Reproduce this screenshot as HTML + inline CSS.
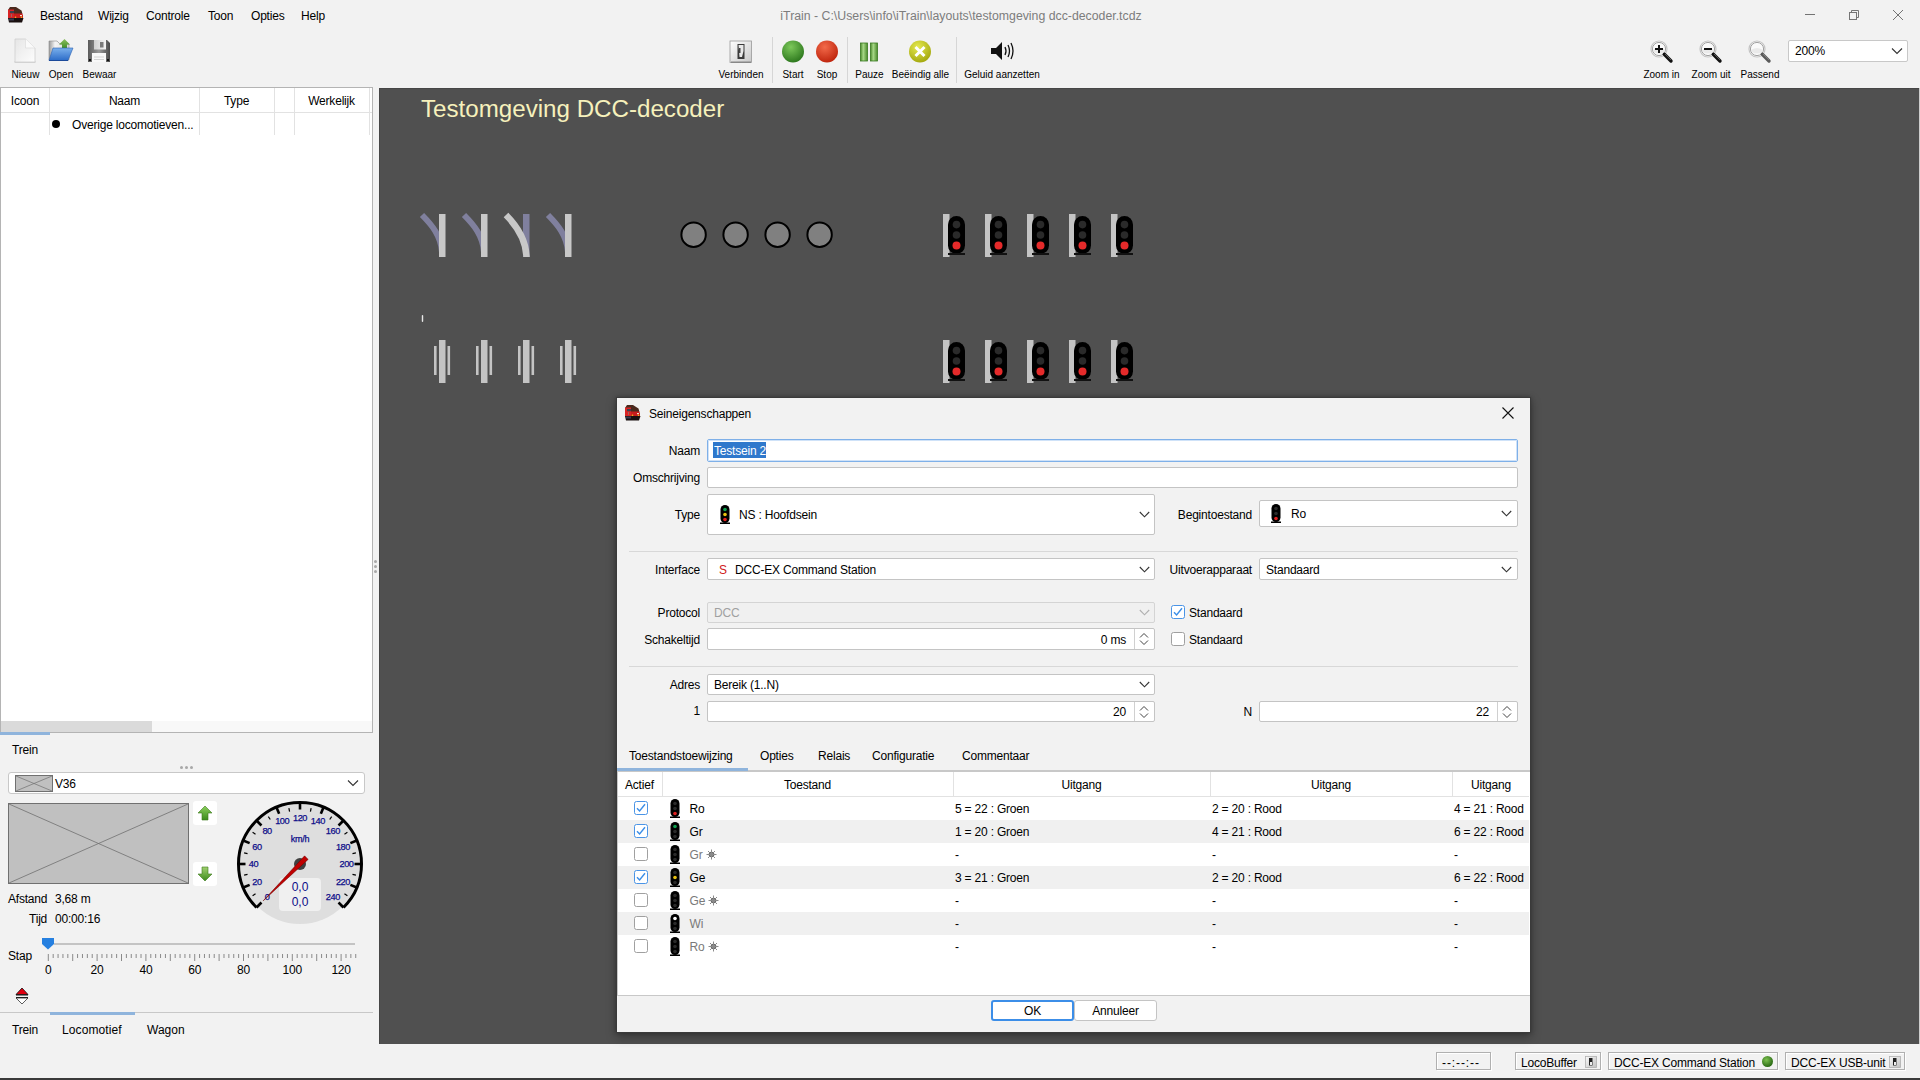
<!DOCTYPE html>
<html><head><meta charset="utf-8"><style>
html,body{margin:0;padding:0;}
body{width:1920px;height:1080px;position:relative;overflow:hidden;background:#f2f2f2;font-family:"Liberation Sans",sans-serif;}
.t{position:absolute;white-space:nowrap;font-family:"Liberation Sans",sans-serif;}
svg{overflow:visible}
</style></head><body>
<svg style="position:absolute;left:0px;top:0px" width="32" height="32" viewBox="0 0 32 32"><path d="M8 10 L10 7 H16 L21.5 10.5 L22.5 14 H8 Z" fill="#4a2a1e"/><rect x="8" y="9.5" width="6" height="9" fill="#d82424"/><rect x="10" y="11" width="4" height="2.2" fill="#3a4050"/><rect x="11" y="14" width="1" height="3" fill="#a06060"/><path d="M14 13.5 H22 L23 15 V18.5 H14 Z" fill="#c81c1c"/><rect x="20" y="15" width="2" height="1.2" fill="#f0e0d0"/><circle cx="15.5" cy="17.2" r="0.8" fill="#f0c020"/><circle cx="21.5" cy="17.2" r="0.8" fill="#f0c020"/><path d="M8 18 H23.5 L22 22.5 H9 Z" fill="#1a1010"/><rect x="9" y="18.5" width="5" height="2" fill="#3a3a50"/></svg>
<div class="t" style="left:40px;top:10.44px;font-size:12px;line-height:12px;color:#000;font-weight:normal;letter-spacing:-0.2px;">Bestand</div>
<div class="t" style="left:98px;top:10.44px;font-size:12px;line-height:12px;color:#000;font-weight:normal;letter-spacing:-0.2px;">Wijzig</div>
<div class="t" style="left:146px;top:10.44px;font-size:12px;line-height:12px;color:#000;font-weight:normal;letter-spacing:-0.2px;">Controle</div>
<div class="t" style="left:208px;top:10.44px;font-size:12px;line-height:12px;color:#000;font-weight:normal;letter-spacing:-0.2px;">Toon</div>
<div class="t" style="left:251px;top:10.44px;font-size:12px;line-height:12px;color:#000;font-weight:normal;letter-spacing:-0.2px;">Opties</div>
<div class="t" style="left:301px;top:10.44px;font-size:12px;line-height:12px;color:#000;font-weight:normal;letter-spacing:-0.2px;">Help</div>
<div class="t" style="left:661.0px;width:600px;text-align:center;top:10.19px;font-size:12.3px;line-height:12.3px;color:#7d7d7d;font-weight:normal;letter-spacing:0px;">iTrain - C:\Users\info\iTrain\layouts\testomgeving dcc-decoder.tcdz</div>
<div style="position:absolute;left:1805px;top:14px;width:10px;height:1px;background:#737373"></div>
<svg style="position:absolute;left:1848px;top:9px" width="12" height="12" viewBox="0 0 12 12"><rect x="1.5" y="3.5" width="7" height="7" fill="none" stroke="#757575" stroke-width="1"/><path d="M3.5 3.5 V1.5 H10.5 V8.5 H8.5" fill="none" stroke="#757575" stroke-width="1"/></svg>
<svg style="position:absolute;left:1892px;top:9px" width="12" height="12" viewBox="0 0 12 12"><path d="M1 1 L11 11 M11 1 L1 11" stroke="#737373" stroke-width="1"/></svg>
<svg style="position:absolute;left:13px;top:38px" width="26" height="27" viewBox="0 0 26 27"><defs><linearGradient id="pg" x1="0" y1="0" x2="1" y2="1"><stop offset="0" stop-color="#e6e6e6"/><stop offset="1" stop-color="#fdfdfd"/></linearGradient></defs><rect x="1.5" y="23" width="21" height="2" fill="#c8c8c8" opacity="0.7"/><path d="M2 1 H12.5 L22 10 V24 H2 Z" fill="url(#pg)" stroke="#cfcfcf" stroke-width="0.8"/><path d="M12.5 1 V10 H22" fill="#fafafa" stroke="#d8d8d8" stroke-width="0.6"/></svg>
<div class="t" style="left:-34.5px;width:120px;text-align:center;top:70.13px;font-size:10px;line-height:10px;color:#000;font-weight:normal;letter-spacing:0px;">Nieuw</div>
<svg style="position:absolute;left:48px;top:38px" width="28" height="26" viewBox="0 0 28 26"><defs><linearGradient id="fb" x1="0" y1="0" x2="0" y2="1"><stop offset="0" stop-color="#7ab0ec"/><stop offset="1" stop-color="#2c6cc8"/></linearGradient><linearGradient id="fk" x1="0" y1="0" x2="1" y2="0"><stop offset="0" stop-color="#9a9a9a"/><stop offset="0.3" stop-color="#f4f4f4"/><stop offset="1" stop-color="#d8d8d8"/></linearGradient><linearGradient id="ga" x1="0" y1="0" x2="0" y2="1"><stop offset="0" stop-color="#8cc060"/><stop offset="1" stop-color="#3c8a22"/></linearGradient></defs><path d="M1 3 H9 L12 6 H21 V22 H1 Z" fill="url(#fk)" stroke="#8a8a8a" stroke-width="0.6"/><path d="M16.5 1 L22 6.5 H19 V11 H14 V6.5 H11 Z" fill="url(#ga)"/><path d="M5 10 H25 L20 22.5 H1 Z" fill="url(#fb)" stroke="#2a5fb0" stroke-width="0.6"/><path d="M1 22.5 H20" stroke="#1c4a9a" stroke-width="1"/></svg>
<div class="t" style="left:1.0px;width:120px;text-align:center;top:70.13px;font-size:10px;line-height:10px;color:#000;font-weight:normal;letter-spacing:0px;">Open</div>
<svg style="position:absolute;left:87px;top:39px" width="24" height="24" viewBox="0 0 24 24"><defs><linearGradient id="fl" x1="0" y1="0" x2="1" y2="0"><stop offset="0" stop-color="#5a5a5a"/><stop offset="0.5" stop-color="#9a9a9a"/><stop offset="1" stop-color="#4a4a4a"/></linearGradient><linearGradient id="fm" x1="0" y1="0" x2="1" y2="0"><stop offset="0" stop-color="#d0d0d0"/><stop offset="1" stop-color="#f4f4f4"/></linearGradient></defs><path d="M1 1 H20 L23 4 V23 H1 Z" fill="url(#fl)"/><rect x="7" y="1" width="12" height="9.5" fill="url(#fm)"/><rect x="13" y="3" width="3.5" height="5.5" fill="#7a7a7a"/><rect x="5" y="14" width="14" height="9" fill="#f8f8f8"/><path d="M7 18 H17 M7 20.5 H17" stroke="#c8c8c8" stroke-width="0.8"/><rect x="2" y="20" width="2" height="2" fill="#111"/><rect x="20" y="20" width="2" height="2" fill="#111"/></svg>
<div class="t" style="left:39.5px;width:120px;text-align:center;top:70.13px;font-size:10px;line-height:10px;color:#000;font-weight:normal;letter-spacing:0px;">Bewaar</div>
<svg style="position:absolute;left:729px;top:40px" width="24" height="24" viewBox="0 0 24 24"><defs><linearGradient id="vb" x1="0" y1="0" x2="1" y2="1"><stop offset="0" stop-color="#ffffff"/><stop offset="1" stop-color="#c8c8c8"/></linearGradient></defs><rect x="1" y="1" width="21.5" height="21.5" fill="url(#vb)" stroke="#9a9a9a" stroke-width="0.8"/><rect x="2" y="21.5" width="20" height="1.5" fill="#888"/><rect x="8.5" y="4" width="7" height="15" fill="#3a3a3a"/><path d="M9.5 5 H14.5 V11 L13 17 H10.5 Z" fill="#e8e8e8"/><rect x="10" y="8" width="1.5" height="5" fill="#444"/></svg>
<div class="t" style="left:681.0px;width:120px;text-align:center;top:70.13px;font-size:10px;line-height:10px;color:#000;font-weight:normal;letter-spacing:0px;">Verbinden</div>
<div style="position:absolute;left:772px;top:37px;width:1px;height:46px;background:#d6d6d6"></div>
<svg style="position:absolute;left:781px;top:40px" width="24" height="24" viewBox="0 0 24 24"><defs><radialGradient id="gg" cx="40%" cy="30%" r="70%"><stop offset="0" stop-color="#7cc85a"/><stop offset="1" stop-color="#2f7a1f"/></radialGradient></defs><circle cx="12" cy="11.5" r="11" fill="url(#gg)"/></svg>
<div class="t" style="left:733.0px;width:120px;text-align:center;top:70.13px;font-size:10px;line-height:10px;color:#000;font-weight:normal;letter-spacing:0px;">Start</div>
<svg style="position:absolute;left:815px;top:40px" width="24" height="24" viewBox="0 0 24 24"><defs><radialGradient id="rg" cx="40%" cy="30%" r="70%"><stop offset="0" stop-color="#f36a4a"/><stop offset="1" stop-color="#c0260e"/></radialGradient></defs><circle cx="12" cy="11.5" r="11" fill="url(#rg)"/></svg>
<div class="t" style="left:767.0px;width:120px;text-align:center;top:70.13px;font-size:10px;line-height:10px;color:#000;font-weight:normal;letter-spacing:0px;">Stop</div>
<div style="position:absolute;left:847px;top:37px;width:1px;height:46px;background:#d6d6d6"></div>
<svg style="position:absolute;left:858px;top:41px" width="22" height="22" viewBox="0 0 22 22"><defs><linearGradient id="pz" x1="0" y1="0" x2="1" y2="0"><stop offset="0" stop-color="#4a8a2a"/><stop offset="0.4" stop-color="#a8d888"/><stop offset="1" stop-color="#4a8a2a"/></linearGradient></defs><rect x="2.5" y="2" width="7" height="18" fill="url(#pz)" stroke="#3a7a22" stroke-width="0.8"/><rect x="12.5" y="2" width="7" height="18" fill="url(#pz)" stroke="#3a7a22" stroke-width="0.8"/></svg>
<div class="t" style="left:809.5px;width:120px;text-align:center;top:70.13px;font-size:10px;line-height:10px;color:#000;font-weight:normal;letter-spacing:0px;">Pauze</div>
<svg style="position:absolute;left:908px;top:40px" width="24" height="24" viewBox="0 0 24 24"><defs><radialGradient id="yg" cx="40%" cy="30%" r="70%"><stop offset="0" stop-color="#e6ea50"/><stop offset="1" stop-color="#a6aa10"/></radialGradient></defs><circle cx="12" cy="11.5" r="11" fill="url(#yg)"/><path d="M7.5 7 L16.5 16 M16.5 7 L7.5 16" stroke="#fff" stroke-width="3"/></svg>
<div class="t" style="left:860.5px;width:120px;text-align:center;top:70.13px;font-size:10px;line-height:10px;color:#000;font-weight:normal;letter-spacing:0px;">Beëindig alle</div>
<div style="position:absolute;left:956px;top:37px;width:1px;height:46px;background:#d6d6d6"></div>
<svg style="position:absolute;left:989px;top:40px" width="26" height="22" viewBox="0 0 26 22"><path d="M2 8 H7 L13 2 V20 L7 14 H2 Z" fill="#111"/><path d="M16 7 Q18 11 16 15 M19 5 Q22 11 19 17 M22 3 Q26 11 22 19" fill="none" stroke="#111" stroke-width="1.3"/></svg>
<div class="t" style="left:942.0px;width:120px;text-align:center;top:70.13px;font-size:10px;line-height:10px;color:#000;font-weight:normal;letter-spacing:0px;">Geluid aanzetten</div>
<svg style="position:absolute;left:1650px;top:39.5px" width="24" height="24" viewBox="0 0 24 24"><circle cx="9" cy="9" r="8" fill="#fafafa" stroke="#c4c4c4" stroke-width="1.2"/><circle cx="9" cy="9" r="6.6" fill="none" stroke="#8a8a8a" stroke-width="0.8"/><path d="M3.5 9.5 Q9 6.5 14.5 9.5 L14 12 Q9 15 4 12 Z" fill="#e6e6e6" opacity="0.8"/><path d="M14.3 14.3 L21 21" stroke="#111" stroke-width="3.4" stroke-linecap="round"/><path d="M15 14 L21 20" stroke="#aaa" stroke-width="0.8" opacity="0.6"/><path d="M5 9 H13 M9 5 V13" stroke="#111" stroke-width="2"/></svg>
<div class="t" style="left:1601.5px;width:120px;text-align:center;top:70.13px;font-size:10px;line-height:10px;color:#000;font-weight:normal;letter-spacing:0px;">Zoom in</div>
<svg style="position:absolute;left:1699px;top:39.5px" width="24" height="24" viewBox="0 0 24 24"><circle cx="9" cy="9" r="8" fill="#fafafa" stroke="#c4c4c4" stroke-width="1.2"/><circle cx="9" cy="9" r="6.6" fill="none" stroke="#8a8a8a" stroke-width="0.8"/><path d="M3.5 9.5 Q9 6.5 14.5 9.5 L14 12 Q9 15 4 12 Z" fill="#e6e6e6" opacity="0.8"/><path d="M14.3 14.3 L21 21" stroke="#111" stroke-width="3.4" stroke-linecap="round"/><path d="M15 14 L21 20" stroke="#aaa" stroke-width="0.8" opacity="0.6"/><path d="M5 9 H13" stroke="#111" stroke-width="2"/></svg>
<div class="t" style="left:1651.0px;width:120px;text-align:center;top:70.13px;font-size:10px;line-height:10px;color:#000;font-weight:normal;letter-spacing:0px;">Zoom uit</div>
<svg style="position:absolute;left:1748px;top:39.5px" width="24" height="24" viewBox="0 0 24 24"><circle cx="9" cy="9" r="8" fill="#fafafa" stroke="#c4c4c4" stroke-width="1.2"/><circle cx="9" cy="9" r="6.6" fill="none" stroke="#8a8a8a" stroke-width="0.8"/><path d="M3.5 9.5 Q9 6.5 14.5 9.5 L14 12 Q9 15 4 12 Z" fill="#e6e6e6" opacity="0.8"/><path d="M14.3 14.3 L21 21" stroke="#5a5a5a" stroke-width="3.4" stroke-linecap="round"/><path d="M15 14 L21 20" stroke="#aaa" stroke-width="0.8" opacity="0.6"/></svg>
<div class="t" style="left:1700.0px;width:120px;text-align:center;top:70.13px;font-size:10px;line-height:10px;color:#000;font-weight:normal;letter-spacing:0px;">Passend</div>
<div style="position:absolute;left:1788px;top:40px;width:120px;height:22px;background:#fff;border:1px solid #c8c8c8;border-radius:2px;box-sizing:border-box"></div>
<div class="t" style="left:1795px;top:45.44px;font-size:12px;line-height:12px;color:#000;font-weight:normal;letter-spacing:-0.2px;">200%</div>
<svg style="position:absolute;left:1891px;top:47px" width="12" height="8" viewBox="0 0 12 8"><path d="M1 1.5 L6 6.5 L11 1.5" fill="none" stroke="#333" stroke-width="1.1"/></svg>
<div style="position:absolute;left:0px;top:87px;width:373px;height:646px;background:#fff;border:1px solid #b4b4b4;border-right-color:#b4b4b4;box-sizing:border-box"></div>
<div style="position:absolute;left:1px;top:112px;width:371px;height:1px;background:#e2e2e2"></div>
<div style="position:absolute;left:1px;top:135px;width:371px;height:0px;"></div>
<div style="position:absolute;left:49px;top:88px;width:1px;height:47px;background:#e2e2e2"></div>
<div style="position:absolute;left:199px;top:88px;width:1px;height:47px;background:#e2e2e2"></div>
<div style="position:absolute;left:274px;top:88px;width:1px;height:47px;background:#e2e2e2"></div>
<div style="position:absolute;left:294px;top:88px;width:1px;height:47px;background:#e2e2e2"></div>
<div style="position:absolute;left:369px;top:88px;width:1px;height:47px;background:#e2e2e2"></div>
<div class="t" style="left:-5.0px;width:60px;text-align:center;top:95.44px;font-size:12px;line-height:12px;color:#000;font-weight:normal;letter-spacing:-0.2px;">Icoon</div>
<div class="t" style="left:74.5px;width:100px;text-align:center;top:95.44px;font-size:12px;line-height:12px;color:#000;font-weight:normal;letter-spacing:-0.2px;">Naam</div>
<div class="t" style="left:206.5px;width:60px;text-align:center;top:95.44px;font-size:12px;line-height:12px;color:#000;font-weight:normal;letter-spacing:-0.2px;">Type</div>
<div class="t" style="left:291.5px;width:80px;text-align:center;top:95.44px;font-size:12px;line-height:12px;color:#000;font-weight:normal;letter-spacing:-0.2px;">Werkelijk</div>
<svg style="position:absolute;left:51px;top:119px" width="10" height="10" viewBox="0 0 10 10"><circle cx="5" cy="5" r="4" fill="#000"/></svg>
<div class="t" style="left:72px;top:119.44px;font-size:12px;line-height:12px;color:#000;font-weight:normal;letter-spacing:-0.2px;">Overige locomotieven...</div>
<div style="position:absolute;left:1px;top:721px;width:371px;height:11px;background:#f8f8f8"></div>
<div style="position:absolute;left:1px;top:721px;width:151px;height:11px;background:#dadada"></div>
<div style="position:absolute;left:374px;top:560px;width:3px;height:3px;background:#a8a8a8;border-radius:50%"></div>
<div style="position:absolute;left:374px;top:565px;width:3px;height:3px;background:#a8a8a8;border-radius:50%"></div>
<div style="position:absolute;left:374px;top:570px;width:3px;height:3px;background:#a8a8a8;border-radius:50%"></div>
<div style="position:absolute;left:0px;top:732px;width:50px;height:3px;background:#8fb4dc"></div>
<div class="t" style="left:12px;top:744.44px;font-size:12px;line-height:12px;color:#000;font-weight:normal;letter-spacing:-0.2px;">Trein</div>
<div style="position:absolute;left:180px;top:766px;width:3px;height:3px;background:#a8a8a8;border-radius:50%"></div>
<div style="position:absolute;left:185px;top:766px;width:3px;height:3px;background:#a8a8a8;border-radius:50%"></div>
<div style="position:absolute;left:190px;top:766px;width:3px;height:3px;background:#a8a8a8;border-radius:50%"></div>
<div style="position:absolute;left:8px;top:772px;width:357px;height:22px;background:#fff;border:1px solid #c8c8c8;border-radius:3px;box-sizing:border-box"></div>
<svg style="position:absolute;left:15px;top:775px" width="38" height="17" viewBox="0 0 38 17"><rect x="0.5" y="0.5" width="37" height="16" fill="#c0c0c0" stroke="#707070"/><path d="M1 1 L37 16 M37 1 L1 16" stroke="#707070" stroke-width="0.7"/></svg>
<div class="t" style="left:55px;top:778.44px;font-size:12px;line-height:12px;color:#000;font-weight:normal;letter-spacing:-0.2px;">V36</div>
<svg style="position:absolute;left:347px;top:779px" width="12" height="8" viewBox="0 0 12 8"><path d="M1 1.5 L6 6.5 L11 1.5" fill="none" stroke="#333" stroke-width="1.1"/></svg>
<svg style="position:absolute;left:8px;top:803px" width="181" height="81" viewBox="0 0 181 81"><rect x="0.5" y="0.5" width="180" height="80" fill="#c0c0c0" stroke="#707070"/><path d="M1 1 L180 80 M180 1 L1 80" stroke="#707070" stroke-width="0.8"/></svg>
<div style="position:absolute;left:193px;top:801px;width:24px;height:24px;background:#fff;border-radius:3px"></div>
<svg style="position:absolute;left:196px;top:804px" width="18" height="18" viewBox="0 0 18 18"><defs><linearGradient id="ag" x1="0" y1="0" x2="0" y2="1"><stop offset="0" stop-color="#8cd05c"/><stop offset="1" stop-color="#3c8a1c"/></linearGradient></defs><path d="M9 2 L16 9 H12 V16 H6 V9 H2 Z" fill="url(#ag)" stroke="#3c7a1c" stroke-width="0.6"/></svg>
<div style="position:absolute;left:193px;top:862px;width:24px;height:24px;background:#fff;border-radius:3px"></div>
<svg style="position:absolute;left:196px;top:865px" width="18" height="18" viewBox="0 0 18 18"><defs><linearGradient id="ag2" x1="0" y1="0" x2="0" y2="1"><stop offset="0" stop-color="#a0d070"/><stop offset="1" stop-color="#3c8a1c"/></linearGradient></defs><path d="M9 16 L16 9 H12 V2 H6 V9 H2 Z" fill="url(#ag2)" stroke="#3c7a1c" stroke-width="0.6"/></svg>
<div class="t" style="left:8px;top:893.44px;font-size:12px;line-height:12px;color:#000;font-weight:normal;letter-spacing:-0.2px;">Afstand</div>
<div class="t" style="left:55px;top:893.44px;font-size:12px;line-height:12px;color:#000;font-weight:normal;letter-spacing:-0.2px;">3,68 m</div>
<div class="t" style="left:29px;top:913.44px;font-size:12px;line-height:12px;color:#000;font-weight:normal;letter-spacing:-0.2px;">Tijd</div>
<div class="t" style="left:55px;top:913.44px;font-size:12px;line-height:12px;color:#000;font-weight:normal;letter-spacing:-0.2px;">00:00:16</div>
<svg style="position:absolute;left:0;top:0" width="380" height="1080"><circle cx="300" cy="864" r="60" fill="#dedede"/><path d="M256.51 907.49 A61.5 61.5 0 1 1 343.49 907.49" fill="none" stroke="#000" stroke-width="3"/><path d="M261.46 902.54 L256.51 907.49" stroke="#000" stroke-width="2.6"/><text x="267.12" y="900.18" font-family="Liberation Sans" font-size="9.2" fill="#0c0c88" stroke="#0c0c88" stroke-width="0.25" letter-spacing="-0.4" text-anchor="middle">0</text><path d="M255.52 893.72 L252.61 895.67" stroke="#000" stroke-width="1.2"/><path d="M249.65 884.86 L243.18 887.54" stroke="#000" stroke-width="2.6"/><text x="257.04" y="885.09" font-family="Liberation Sans" font-size="9.2" fill="#0c0c88" stroke="#0c0c88" stroke-width="0.25" letter-spacing="-0.4" text-anchor="middle">20</text><path d="M247.53 874.44 L244.10 875.12" stroke="#000" stroke-width="1.2"/><path d="M245.50 864.00 L238.50 864.00" stroke="#000" stroke-width="2.6"/><text x="253.50" y="867.30" font-family="Liberation Sans" font-size="9.2" fill="#0c0c88" stroke="#0c0c88" stroke-width="0.25" letter-spacing="-0.4" text-anchor="middle">40</text><path d="M247.53 853.56 L244.10 852.88" stroke="#000" stroke-width="1.2"/><path d="M249.65 843.14 L243.18 840.46" stroke="#000" stroke-width="2.6"/><text x="257.04" y="849.51" font-family="Liberation Sans" font-size="9.2" fill="#0c0c88" stroke="#0c0c88" stroke-width="0.25" letter-spacing="-0.4" text-anchor="middle">60</text><path d="M255.52 834.28 L252.61 832.33" stroke="#000" stroke-width="1.2"/><path d="M261.46 825.46 L256.51 820.51" stroke="#000" stroke-width="2.6"/><text x="267.12" y="834.42" font-family="Liberation Sans" font-size="9.2" fill="#0c0c88" stroke="#0c0c88" stroke-width="0.25" letter-spacing="-0.4" text-anchor="middle">80</text><path d="M270.28 819.52 L268.33 816.61" stroke="#000" stroke-width="1.2"/><path d="M279.14 813.65 L276.46 807.18" stroke="#000" stroke-width="2.6"/><text x="282.21" y="824.34" font-family="Liberation Sans" font-size="9.2" fill="#0c0c88" stroke="#0c0c88" stroke-width="0.25" letter-spacing="-0.4" text-anchor="middle">100</text><path d="M289.56 811.53 L288.88 808.10" stroke="#000" stroke-width="1.2"/><path d="M300.00 809.50 L300.00 802.50" stroke="#000" stroke-width="2.6"/><text x="300.00" y="820.80" font-family="Liberation Sans" font-size="9.2" fill="#0c0c88" stroke="#0c0c88" stroke-width="0.25" letter-spacing="-0.4" text-anchor="middle">120</text><path d="M310.44 811.53 L311.12 808.10" stroke="#000" stroke-width="1.2"/><path d="M320.86 813.65 L323.54 807.18" stroke="#000" stroke-width="2.6"/><text x="317.79" y="824.34" font-family="Liberation Sans" font-size="9.2" fill="#0c0c88" stroke="#0c0c88" stroke-width="0.25" letter-spacing="-0.4" text-anchor="middle">140</text><path d="M329.72 819.52 L331.67 816.61" stroke="#000" stroke-width="1.2"/><path d="M338.54 825.46 L343.49 820.51" stroke="#000" stroke-width="2.6"/><text x="332.88" y="834.42" font-family="Liberation Sans" font-size="9.2" fill="#0c0c88" stroke="#0c0c88" stroke-width="0.25" letter-spacing="-0.4" text-anchor="middle">160</text><path d="M344.48 834.28 L347.39 832.33" stroke="#000" stroke-width="1.2"/><path d="M350.35 843.14 L356.82 840.46" stroke="#000" stroke-width="2.6"/><text x="342.96" y="849.51" font-family="Liberation Sans" font-size="9.2" fill="#0c0c88" stroke="#0c0c88" stroke-width="0.25" letter-spacing="-0.4" text-anchor="middle">180</text><path d="M352.47 853.56 L355.90 852.88" stroke="#000" stroke-width="1.2"/><path d="M354.50 864.00 L361.50 864.00" stroke="#000" stroke-width="2.6"/><text x="346.50" y="867.30" font-family="Liberation Sans" font-size="9.2" fill="#0c0c88" stroke="#0c0c88" stroke-width="0.25" letter-spacing="-0.4" text-anchor="middle">200</text><path d="M352.47 874.44 L355.90 875.12" stroke="#000" stroke-width="1.2"/><path d="M350.35 884.86 L356.82 887.54" stroke="#000" stroke-width="2.6"/><text x="342.96" y="885.09" font-family="Liberation Sans" font-size="9.2" fill="#0c0c88" stroke="#0c0c88" stroke-width="0.25" letter-spacing="-0.4" text-anchor="middle">220</text><path d="M344.48 893.72 L347.39 895.67" stroke="#000" stroke-width="1.2"/><path d="M338.54 902.54 L343.49 907.49" stroke="#000" stroke-width="2.6"/><text x="332.88" y="900.18" font-family="Liberation Sans" font-size="9.2" fill="#0c0c88" stroke="#0c0c88" stroke-width="0.25" letter-spacing="-0.4" text-anchor="middle">240</text><text x="300" y="842" font-family="Liberation Sans" font-size="9" fill="#0c0c88" stroke="#0c0c88" stroke-width="0.25" letter-spacing="-0.2" text-anchor="middle">km/h</text><rect x="279" y="878" width="42" height="33" rx="4" fill="#f0f0f0"/><text x="300" y="891" font-family="Liberation Sans" font-size="12" fill="#0c0c88" text-anchor="middle">0,0</text><text x="300" y="906" font-family="Liberation Sans" font-size="12" fill="#0c0c88" text-anchor="middle">0,0</text><circle cx="300" cy="864" r="6" fill="#404040"/><path d="M263.23 900.77 L308.13 859.40 L304.60 855.87 Z" fill="#c00000" stroke="#600" stroke-width="0.5"/></svg>
<div style="position:absolute;left:54px;top:943px;width:301px;height:2px;background:#c4c4c4"></div>
<svg style="position:absolute;left:41px;top:937px" width="14" height="14" viewBox="0 0 14 14"><path d="M1 1 H13 V7 L7 12.5 L1 7 Z" fill="#2680e0"/></svg>
<svg style="position:absolute;left:0;top:0" width="380" height="1080"><rect x="47.80" y="954" width="1" height="7" fill="#8a8a8a"/><rect x="52.68" y="954" width="1" height="4" fill="#8a8a8a"/><rect x="57.56" y="954" width="1" height="4" fill="#8a8a8a"/><rect x="62.44" y="954" width="1" height="4" fill="#8a8a8a"/><rect x="67.32" y="954" width="1" height="4" fill="#8a8a8a"/><rect x="72.20" y="954" width="1" height="7" fill="#8a8a8a"/><rect x="77.08" y="954" width="1" height="4" fill="#8a8a8a"/><rect x="81.96" y="954" width="1" height="4" fill="#8a8a8a"/><rect x="86.84" y="954" width="1" height="4" fill="#8a8a8a"/><rect x="91.72" y="954" width="1" height="4" fill="#8a8a8a"/><rect x="96.60" y="954" width="1" height="7" fill="#8a8a8a"/><rect x="101.48" y="954" width="1" height="4" fill="#8a8a8a"/><rect x="106.36" y="954" width="1" height="4" fill="#8a8a8a"/><rect x="111.24" y="954" width="1" height="4" fill="#8a8a8a"/><rect x="116.12" y="954" width="1" height="4" fill="#8a8a8a"/><rect x="121.00" y="954" width="1" height="7" fill="#8a8a8a"/><rect x="125.88" y="954" width="1" height="4" fill="#8a8a8a"/><rect x="130.76" y="954" width="1" height="4" fill="#8a8a8a"/><rect x="135.64" y="954" width="1" height="4" fill="#8a8a8a"/><rect x="140.52" y="954" width="1" height="4" fill="#8a8a8a"/><rect x="145.40" y="954" width="1" height="7" fill="#8a8a8a"/><rect x="150.28" y="954" width="1" height="4" fill="#8a8a8a"/><rect x="155.16" y="954" width="1" height="4" fill="#8a8a8a"/><rect x="160.04" y="954" width="1" height="4" fill="#8a8a8a"/><rect x="164.92" y="954" width="1" height="4" fill="#8a8a8a"/><rect x="169.80" y="954" width="1" height="7" fill="#8a8a8a"/><rect x="174.68" y="954" width="1" height="4" fill="#8a8a8a"/><rect x="179.56" y="954" width="1" height="4" fill="#8a8a8a"/><rect x="184.44" y="954" width="1" height="4" fill="#8a8a8a"/><rect x="189.32" y="954" width="1" height="4" fill="#8a8a8a"/><rect x="194.20" y="954" width="1" height="7" fill="#8a8a8a"/><rect x="199.08" y="954" width="1" height="4" fill="#8a8a8a"/><rect x="203.96" y="954" width="1" height="4" fill="#8a8a8a"/><rect x="208.84" y="954" width="1" height="4" fill="#8a8a8a"/><rect x="213.72" y="954" width="1" height="4" fill="#8a8a8a"/><rect x="218.60" y="954" width="1" height="7" fill="#8a8a8a"/><rect x="223.48" y="954" width="1" height="4" fill="#8a8a8a"/><rect x="228.36" y="954" width="1" height="4" fill="#8a8a8a"/><rect x="233.24" y="954" width="1" height="4" fill="#8a8a8a"/><rect x="238.12" y="954" width="1" height="4" fill="#8a8a8a"/><rect x="243.00" y="954" width="1" height="7" fill="#8a8a8a"/><rect x="247.88" y="954" width="1" height="4" fill="#8a8a8a"/><rect x="252.76" y="954" width="1" height="4" fill="#8a8a8a"/><rect x="257.64" y="954" width="1" height="4" fill="#8a8a8a"/><rect x="262.52" y="954" width="1" height="4" fill="#8a8a8a"/><rect x="267.40" y="954" width="1" height="7" fill="#8a8a8a"/><rect x="272.28" y="954" width="1" height="4" fill="#8a8a8a"/><rect x="277.16" y="954" width="1" height="4" fill="#8a8a8a"/><rect x="282.04" y="954" width="1" height="4" fill="#8a8a8a"/><rect x="286.92" y="954" width="1" height="4" fill="#8a8a8a"/><rect x="291.80" y="954" width="1" height="7" fill="#8a8a8a"/><rect x="296.68" y="954" width="1" height="4" fill="#8a8a8a"/><rect x="301.56" y="954" width="1" height="4" fill="#8a8a8a"/><rect x="306.44" y="954" width="1" height="4" fill="#8a8a8a"/><rect x="311.32" y="954" width="1" height="4" fill="#8a8a8a"/><rect x="316.20" y="954" width="1" height="7" fill="#8a8a8a"/><rect x="321.08" y="954" width="1" height="4" fill="#8a8a8a"/><rect x="325.96" y="954" width="1" height="4" fill="#8a8a8a"/><rect x="330.84" y="954" width="1" height="4" fill="#8a8a8a"/><rect x="335.72" y="954" width="1" height="4" fill="#8a8a8a"/><rect x="340.60" y="954" width="1" height="7" fill="#8a8a8a"/><rect x="345.48" y="954" width="1" height="4" fill="#8a8a8a"/><rect x="350.36" y="954" width="1" height="4" fill="#8a8a8a"/><rect x="355.24" y="954" width="1" height="4" fill="#8a8a8a"/></svg>
<div class="t" style="left:8px;top:950.44px;font-size:12px;line-height:12px;color:#000;font-weight:normal;letter-spacing:-0.2px;">Stap</div>
<div class="t" style="left:28.299999999999997px;width:40px;text-align:center;top:964.44px;font-size:12px;line-height:12px;color:#000;font-weight:normal;letter-spacing:-0.2px;">0</div>
<div class="t" style="left:77.1px;width:40px;text-align:center;top:964.44px;font-size:12px;line-height:12px;color:#000;font-weight:normal;letter-spacing:-0.2px;">20</div>
<div class="t" style="left:125.89999999999998px;width:40px;text-align:center;top:964.44px;font-size:12px;line-height:12px;color:#000;font-weight:normal;letter-spacing:-0.2px;">40</div>
<div class="t" style="left:174.7px;width:40px;text-align:center;top:964.44px;font-size:12px;line-height:12px;color:#000;font-weight:normal;letter-spacing:-0.2px;">60</div>
<div class="t" style="left:223.5px;width:40px;text-align:center;top:964.44px;font-size:12px;line-height:12px;color:#000;font-weight:normal;letter-spacing:-0.2px;">80</div>
<div class="t" style="left:272.3px;width:40px;text-align:center;top:964.44px;font-size:12px;line-height:12px;color:#000;font-weight:normal;letter-spacing:-0.2px;">100</div>
<div class="t" style="left:321.09999999999997px;width:40px;text-align:center;top:964.44px;font-size:12px;line-height:12px;color:#000;font-weight:normal;letter-spacing:-0.2px;">120</div>
<svg style="position:absolute;left:14px;top:986px" width="16" height="20" viewBox="0 0 16 20"><path d="M8 2 L14 8.5 H2 Z" fill="#e00010" stroke="#111" stroke-width="0.8"/><rect x="2" y="8.5" width="12" height="1" fill="#111"/><rect x="2" y="11" width="12" height="1" fill="#111"/><path d="M2 12 H14 L8 18 Z" fill="#fff" stroke="#333" stroke-width="0.8"/></svg>
<div style="position:absolute;left:0px;top:1012px;width:373px;height:1px;background:#c8c8c8"></div>
<div style="position:absolute;left:50px;top:1012px;width:85px;height:3px;background:#8fb4dc"></div>
<div class="t" style="left:12px;top:1024.44px;font-size:12px;line-height:12px;color:#000;font-weight:normal;letter-spacing:-0.2px;">Trein</div>
<div class="t" style="left:62px;top:1024.44px;font-size:12px;line-height:12px;color:#000;font-weight:normal;letter-spacing:0.1px;">Locomotief</div>
<div class="t" style="left:147px;top:1024.44px;font-size:12px;line-height:12px;color:#000;font-weight:normal;letter-spacing:0px;">Wagon</div>
<div style="position:absolute;left:379px;top:88px;width:1540px;height:956px;background:#505050;box-shadow:inset 1px 1px 0 #464646"></div>
<div style="position:absolute;left:1919px;top:88px;width:1px;height:956px;background:#cdcdcd"></div>
<div class="t" style="left:421px;top:97.16px;font-size:24.15px;line-height:24.15px;color:#f6f1bc;font-weight:normal;letter-spacing:0px;">Testomgeving DCC-decoder</div>
<svg style="position:absolute;left:0;top:0" width="1920" height="1080"><path d="M422 215 C432 225 441 236 442 252" fill="none" stroke="#80809e" stroke-width="6"/><rect x="439" y="214" width="6.5" height="43" fill="#c8c8c8"/><rect x="439" y="340" width="6.5" height="43" fill="#c4c4c4"/><rect x="434" y="346" width="2.6" height="29" fill="#c4c4c4"/><rect x="447.5" y="346" width="2.6" height="29" fill="#c4c4c4"/><circle cx="693.6" cy="234.7" r="12.2" fill="#808080" stroke="#000" stroke-width="2"/><path d="M464 215 C474 225 483 236 484 252" fill="none" stroke="#80809e" stroke-width="6"/><rect x="481" y="214" width="6.5" height="43" fill="#c8c8c8"/><rect x="481" y="340" width="6.5" height="43" fill="#c4c4c4"/><rect x="476" y="346" width="2.6" height="29" fill="#c4c4c4"/><rect x="489.5" y="346" width="2.6" height="29" fill="#c4c4c4"/><circle cx="735.6" cy="234.7" r="12.2" fill="#808080" stroke="#000" stroke-width="2"/><rect x="523" y="214" width="6.5" height="43" fill="#80809e"/><path d="M506 215 C516 225 526 238 526.5 257" fill="none" stroke="#c8c8c8" stroke-width="6.5"/><rect x="523" y="340" width="6.5" height="43" fill="#c4c4c4"/><rect x="518" y="346" width="2.6" height="29" fill="#c4c4c4"/><rect x="531.5" y="346" width="2.6" height="29" fill="#c4c4c4"/><circle cx="777.6" cy="234.7" r="12.2" fill="#808080" stroke="#000" stroke-width="2"/><path d="M548 215 C558 225 567 236 568 252" fill="none" stroke="#80809e" stroke-width="6"/><rect x="565" y="214" width="6.5" height="43" fill="#c8c8c8"/><rect x="565" y="340" width="6.5" height="43" fill="#c4c4c4"/><rect x="560" y="346" width="2.6" height="29" fill="#c4c4c4"/><rect x="573.5" y="346" width="2.6" height="29" fill="#c4c4c4"/><circle cx="819.6" cy="234.7" r="12.2" fill="#808080" stroke="#000" stroke-width="2"/><rect x="421.8" y="315" width="1.4" height="7" rx="0.7" fill="#e8e8e8"/><rect x="943" y="214" width="6.5" height="43" fill="#c4c4c4"/><rect x="948" y="216" width="17" height="38" rx="8.5" fill="#000"/><rect x="948" y="253" width="17" height="2" fill="#111"/><circle cx="956.5" cy="224.6" r="3.8" fill="#2a2a2a"/><circle cx="956.5" cy="235" r="3.8" fill="#2a2a2a"/><circle cx="956.5" cy="245.5" r="4" fill="#e52a2a"/><rect x="985" y="214" width="6.5" height="43" fill="#c4c4c4"/><rect x="990" y="216" width="17" height="38" rx="8.5" fill="#000"/><rect x="990" y="253" width="17" height="2" fill="#111"/><circle cx="998.5" cy="224.6" r="3.8" fill="#2a2a2a"/><circle cx="998.5" cy="235" r="3.8" fill="#2a2a2a"/><circle cx="998.5" cy="245.5" r="4" fill="#e52a2a"/><rect x="1027" y="214" width="6.5" height="43" fill="#c4c4c4"/><rect x="1032" y="216" width="17" height="38" rx="8.5" fill="#000"/><rect x="1032" y="253" width="17" height="2" fill="#111"/><circle cx="1040.5" cy="224.6" r="3.8" fill="#2a2a2a"/><circle cx="1040.5" cy="235" r="3.8" fill="#2a2a2a"/><circle cx="1040.5" cy="245.5" r="4" fill="#e52a2a"/><rect x="1069" y="214" width="6.5" height="43" fill="#c4c4c4"/><rect x="1074" y="216" width="17" height="38" rx="8.5" fill="#000"/><rect x="1074" y="253" width="17" height="2" fill="#111"/><circle cx="1082.5" cy="224.6" r="3.8" fill="#2a2a2a"/><circle cx="1082.5" cy="235" r="3.8" fill="#2a2a2a"/><circle cx="1082.5" cy="245.5" r="4" fill="#e52a2a"/><rect x="1111" y="214" width="6.5" height="43" fill="#c4c4c4"/><rect x="1116" y="216" width="17" height="38" rx="8.5" fill="#000"/><rect x="1116" y="253" width="17" height="2" fill="#111"/><circle cx="1124.5" cy="224.6" r="3.8" fill="#2a2a2a"/><circle cx="1124.5" cy="235" r="3.8" fill="#2a2a2a"/><circle cx="1124.5" cy="245.5" r="4" fill="#e52a2a"/><rect x="943" y="340" width="6.5" height="43" fill="#c4c4c4"/><rect x="948" y="342" width="17" height="38" rx="8.5" fill="#000"/><rect x="948" y="379" width="17" height="2" fill="#111"/><circle cx="956.5" cy="350.6" r="3.8" fill="#2a2a2a"/><circle cx="956.5" cy="361" r="3.8" fill="#2a2a2a"/><circle cx="956.5" cy="371.5" r="4" fill="#e52a2a"/><rect x="985" y="340" width="6.5" height="43" fill="#c4c4c4"/><rect x="990" y="342" width="17" height="38" rx="8.5" fill="#000"/><rect x="990" y="379" width="17" height="2" fill="#111"/><circle cx="998.5" cy="350.6" r="3.8" fill="#2a2a2a"/><circle cx="998.5" cy="361" r="3.8" fill="#2a2a2a"/><circle cx="998.5" cy="371.5" r="4" fill="#e52a2a"/><rect x="1027" y="340" width="6.5" height="43" fill="#c4c4c4"/><rect x="1032" y="342" width="17" height="38" rx="8.5" fill="#000"/><rect x="1032" y="379" width="17" height="2" fill="#111"/><circle cx="1040.5" cy="350.6" r="3.8" fill="#2a2a2a"/><circle cx="1040.5" cy="361" r="3.8" fill="#2a2a2a"/><circle cx="1040.5" cy="371.5" r="4" fill="#e52a2a"/><rect x="1069" y="340" width="6.5" height="43" fill="#c4c4c4"/><rect x="1074" y="342" width="17" height="38" rx="8.5" fill="#000"/><rect x="1074" y="379" width="17" height="2" fill="#111"/><circle cx="1082.5" cy="350.6" r="3.8" fill="#2a2a2a"/><circle cx="1082.5" cy="361" r="3.8" fill="#2a2a2a"/><circle cx="1082.5" cy="371.5" r="4" fill="#e52a2a"/><rect x="1111" y="340" width="6.5" height="43" fill="#c4c4c4"/><rect x="1116" y="342" width="17" height="38" rx="8.5" fill="#000"/><rect x="1116" y="379" width="17" height="2" fill="#111"/><circle cx="1124.5" cy="350.6" r="3.8" fill="#2a2a2a"/><circle cx="1124.5" cy="361" r="3.8" fill="#2a2a2a"/><circle cx="1124.5" cy="371.5" r="4" fill="#e52a2a"/></svg>
<div style="position:absolute;left:0px;top:1044px;width:1920px;height:34px;background:#f2f2f2"></div>
<div style="position:absolute;left:0px;top:1078px;width:1920px;height:2px;background:#3a3a3a"></div>
<div style="position:absolute;left:1436px;top:1052px;width:55px;height:18px;border:1px solid #b0b0b0;box-shadow:inset 1px 1px 0 #fff, 1px 1px 0 #fff;box-sizing:border-box"></div>
<div class="t" style="left:1442px;top:1057.44px;font-size:12px;line-height:12px;color:#000;font-weight:normal;letter-spacing:0.9px;">--:--:--</div>
<div style="position:absolute;left:1515px;top:1052px;width:86px;height:18px;border:1px solid #b0b0b0;box-shadow:inset 1px 1px 0 #fff, 1px 1px 0 #fff;box-sizing:border-box"></div>
<div class="t" style="left:1521px;top:1057.44px;font-size:12px;line-height:12px;color:#000;font-weight:normal;letter-spacing:-0.2px;">LocoBuffer</div>
<div style="position:absolute;left:1608px;top:1052px;width:170px;height:18px;border:1px solid #b0b0b0;box-shadow:inset 1px 1px 0 #fff, 1px 1px 0 #fff;box-sizing:border-box"></div>
<div class="t" style="left:1614px;top:1057.44px;font-size:12px;line-height:12px;color:#000;font-weight:normal;letter-spacing:-0.2px;">DCC-EX Command Station</div>
<div style="position:absolute;left:1785px;top:1052px;width:120px;height:18px;border:1px solid #b0b0b0;box-shadow:inset 1px 1px 0 #fff, 1px 1px 0 #fff;box-sizing:border-box"></div>
<div class="t" style="left:1791px;top:1057.44px;font-size:12px;line-height:12px;color:#000;font-weight:normal;letter-spacing:-0.2px;">DCC-EX USB-unit</div>
<svg style="position:absolute;left:1585px;top:1056px" width="12" height="12" viewBox="0 0 12 12"><defs><linearGradient id="sw" x1="0" y1="0" x2="1" y2="1"><stop offset="0" stop-color="#fafafa"/><stop offset="1" stop-color="#c0c0c0"/></linearGradient></defs><rect x="0.5" y="0.5" width="11" height="11" fill="url(#sw)" stroke="#b0b0b0" stroke-width="0.8"/><rect x="4" y="2" width="3.5" height="7.5" fill="#222"/><rect x="5" y="6" width="2" height="3" fill="#eee"/></svg>
<svg style="position:absolute;left:1889px;top:1056px" width="12" height="12" viewBox="0 0 12 12"><defs><linearGradient id="sw2" x1="0" y1="0" x2="1" y2="1"><stop offset="0" stop-color="#fafafa"/><stop offset="1" stop-color="#c0c0c0"/></linearGradient></defs><rect x="0.5" y="0.5" width="11" height="11" fill="url(#sw2)" stroke="#b0b0b0" stroke-width="0.8"/><rect x="4" y="2" width="3.5" height="7.5" fill="#222"/><rect x="5" y="6" width="2" height="3" fill="#eee"/></svg>
<svg style="position:absolute;left:1761px;top:1055px" width="13" height="13" viewBox="0 0 13 13"><defs><radialGradient id="sg" cx="40%" cy="35%" r="65%"><stop offset="0" stop-color="#7cc050"/><stop offset="1" stop-color="#2a6a14"/></radialGradient></defs><circle cx="6.5" cy="6.5" r="5.5" fill="url(#sg)"/></svg>
<div style="position:absolute;left:616px;top:397px;width:915px;height:636px;background:#3a3a3a;box-shadow:0 4px 10px rgba(0,0,0,0.3), 0 0 4px rgba(0,0,0,0.25)"></div>
<div style="position:absolute;left:617px;top:398px;width:913px;height:634px;background:#f2f2f2"></div>
<svg style="position:absolute;left:617px;top:398px" width="32" height="32" viewBox="0 0 32 32"><path d="M8 10 L10 7 H16 L21.5 10.5 L22.5 14 H8 Z" fill="#4a2a1e"/><rect x="8" y="9.5" width="6" height="9" fill="#d82424"/><rect x="10" y="11" width="4" height="2.2" fill="#3a4050"/><rect x="11" y="14" width="1" height="3" fill="#a06060"/><path d="M14 13.5 H22 L23 15 V18.5 H14 Z" fill="#c81c1c"/><rect x="20" y="15" width="2" height="1.2" fill="#f0e0d0"/><circle cx="15.5" cy="17.2" r="0.8" fill="#f0c020"/><circle cx="21.5" cy="17.2" r="0.8" fill="#f0c020"/><path d="M8 18 H23.5 L22 22.5 H9 Z" fill="#1a1010"/><rect x="9" y="18.5" width="5" height="2" fill="#3a3a50"/></svg>
<div class="t" style="left:649px;top:408.44px;font-size:12px;line-height:12px;color:#000;font-weight:normal;letter-spacing:-0.2px;">Seineigenschappen</div>
<svg style="position:absolute;left:1502px;top:407px" width="12" height="12" viewBox="0 0 12 12"><path d="M0.5 0.5 L11.5 11.5 M11.5 0.5 L0.5 11.5" stroke="#111" stroke-width="1.1"/></svg>
<div class="t" style="left:500px;width:200px;text-align:right;top:445.44px;font-size:12px;line-height:12px;color:#000;font-weight:normal;letter-spacing:-0.2px;">Naam</div>
<div style="position:absolute;left:707px;top:439px;width:811px;height:23px;background:#fff;border:1px solid #7fb0e8;border-radius:2px;box-sizing:border-box"></div>
<div style="position:absolute;left:708px;top:440px;width:809px;height:21px;border:1px solid #cfe2f8;box-sizing:border-box"></div>
<div style="position:absolute;left:713px;top:442px;width:53px;height:16px;background:#2f78cc"></div>
<div class="t" style="left:714px;top:445.44px;font-size:12px;line-height:12px;color:#fff;font-weight:normal;letter-spacing:-0.2px;">Testsein 2</div>
<div class="t" style="left:500px;width:200px;text-align:right;top:472.44px;font-size:12px;line-height:12px;color:#000;font-weight:normal;letter-spacing:-0.2px;">Omschrijving</div>
<div style="position:absolute;left:707px;top:467px;width:811px;height:21px;background:#fff;border:1px solid #c4c4c4;border-radius:2px;box-sizing:border-box"></div>
<div class="t" style="left:500px;width:200px;text-align:right;top:509.44px;font-size:12px;line-height:12px;color:#000;font-weight:normal;letter-spacing:-0.2px;">Type</div>
<div style="position:absolute;left:707px;top:494px;width:448px;height:41px;background:#fff;border:1px solid #c4c4c4;border-radius:2px;box-sizing:border-box"></div>
<svg style="position:absolute;left:720px;top:505px" width="10" height="19" viewBox="0 0 10 19"><rect x="0.5" y="0" width="9" height="18" rx="4.5" fill="#000"/><rect x="0" y="17.5" width="10" height="1.5" fill="#000"/><circle cx="5" cy="4.5" r="1.8" fill="#10a050"/><circle cx="5" cy="9.5" r="1.8" fill="#e8c010"/><circle cx="5" cy="14.5" r="1.8" fill="#e02020"/></svg>
<div class="t" style="left:739px;top:509.44px;font-size:12px;line-height:12px;color:#000;font-weight:normal;letter-spacing:-0.2px;">NS : Hoofdsein</div>
<svg style="position:absolute;left:1139px;top:511px" width="11" height="7" viewBox="0 0 11 7"><path d="M0.8 1 L5.5 5.8 L10.2 1" fill="none" stroke="#333" stroke-width="1.1"/></svg>
<div class="t" style="left:1052px;width:200px;text-align:right;top:509.44px;font-size:12px;line-height:12px;color:#000;font-weight:normal;letter-spacing:-0.2px;">Begintoestand</div>
<div style="position:absolute;left:1259px;top:500px;width:259px;height:27px;background:#fff;border:1px solid #c4c4c4;border-radius:2px;box-sizing:border-box"></div>
<svg style="position:absolute;left:1271px;top:504px" width="10" height="19" viewBox="0 0 10 19"><rect x="0.5" y="0" width="9" height="18" rx="4.5" fill="#000"/><rect x="0" y="17.5" width="10" height="1.5" fill="#000"/><circle cx="5" cy="4.5" r="1.8" fill="#2a2a2a"/><circle cx="5" cy="9.5" r="1.8" fill="#2a2a2a"/><circle cx="5" cy="14.5" r="1.8" fill="#e02020"/></svg>
<div class="t" style="left:1291px;top:508.44px;font-size:12px;line-height:12px;color:#000;font-weight:normal;letter-spacing:-0.2px;">Ro</div>
<svg style="position:absolute;left:1501px;top:510px" width="11" height="7" viewBox="0 0 11 7"><path d="M0.8 1 L5.5 5.8 L10.2 1" fill="none" stroke="#333" stroke-width="1.1"/></svg>
<div style="position:absolute;left:629px;top:551px;width:889px;height:1px;background:#d8d8d8"></div>
<div class="t" style="left:500px;width:200px;text-align:right;top:564.44px;font-size:12px;line-height:12px;color:#000;font-weight:normal;letter-spacing:-0.2px;">Interface</div>
<div style="position:absolute;left:707px;top:558px;width:448px;height:22px;background:#fff;border:1px solid #c4c4c4;border-radius:2px;box-sizing:border-box"></div>
<div class="t" style="left:719px;top:564.44px;font-size:12px;line-height:12px;color:#d02020;font-weight:normal;letter-spacing:-0.2px;">S</div>
<div class="t" style="left:735px;top:564.44px;font-size:12px;line-height:12px;color:#000;font-weight:normal;letter-spacing:-0.2px;">DCC-EX Command Station</div>
<svg style="position:absolute;left:1139px;top:566px" width="11" height="7" viewBox="0 0 11 7"><path d="M0.8 1 L5.5 5.8 L10.2 1" fill="none" stroke="#333" stroke-width="1.1"/></svg>
<div class="t" style="left:1052px;width:200px;text-align:right;top:564.44px;font-size:12px;line-height:12px;color:#000;font-weight:normal;letter-spacing:-0.2px;">Uitvoerapparaat</div>
<div style="position:absolute;left:1259px;top:558px;width:259px;height:22px;background:#fff;border:1px solid #c4c4c4;border-radius:2px;box-sizing:border-box"></div>
<div class="t" style="left:1266px;top:564.44px;font-size:12px;line-height:12px;color:#000;font-weight:normal;letter-spacing:-0.2px;">Standaard</div>
<svg style="position:absolute;left:1501px;top:566px" width="11" height="7" viewBox="0 0 11 7"><path d="M0.8 1 L5.5 5.8 L10.2 1" fill="none" stroke="#333" stroke-width="1.1"/></svg>
<div class="t" style="left:500px;width:200px;text-align:right;top:607.44px;font-size:12px;line-height:12px;color:#000;font-weight:normal;letter-spacing:-0.2px;">Protocol</div>
<div style="position:absolute;left:707px;top:602px;width:448px;height:21px;background:#f0f0f0;border:1px solid #d4d4d4;border-radius:2px;box-sizing:border-box"></div>
<div class="t" style="left:714px;top:607.44px;font-size:12px;line-height:12px;color:#a0a0a0;font-weight:normal;letter-spacing:-0.2px;">DCC</div>
<svg style="position:absolute;left:1139px;top:609px" width="11" height="7" viewBox="0 0 11 7"><path d="M0.8 1 L5.5 5.8 L10.2 1" fill="none" stroke="#b0b0b0" stroke-width="1.1"/></svg>
<svg style="position:absolute;left:1171px;top:605px" width="14" height="14" viewBox="0 0 14 14"><rect x="0.5" y="0.5" width="13" height="13" rx="2" fill="#fff" stroke="#4a94e6" stroke-width="1"/><path d="M3 7.2 L5.6 10 L11 3.2" fill="none" stroke="#3b8ee8" stroke-width="1.4"/></svg>
<div class="t" style="left:1189px;top:607.44px;font-size:12px;line-height:12px;color:#000;font-weight:normal;letter-spacing:-0.2px;">Standaard</div>
<div class="t" style="left:500px;width:200px;text-align:right;top:634.44px;font-size:12px;line-height:12px;color:#000;font-weight:normal;letter-spacing:-0.2px;">Schakeltijd</div>
<div style="position:absolute;left:707px;top:628px;width:448px;height:22px;background:#fff;border:1px solid #c4c4c4;border-radius:2px;box-sizing:border-box"></div>
<div style="position:absolute;left:1134px;top:629px;width:1px;height:20px;background:#d0d0d0"></div>
<svg style="position:absolute;left:1139px;top:632px" width="11" height="14" viewBox="0 0 11 14"><path d="M1 5.5 L5 1.5 L9 5.5 M1 8.5 L5 12.5 L9 8.5" fill="none" stroke="#444" stroke-width="1"/></svg>
<div class="t" style="left:1046px;width:80px;text-align:right;top:634.44px;font-size:12px;line-height:12px;color:#000;font-weight:normal;letter-spacing:-0.2px;">0 ms</div>
<svg style="position:absolute;left:1171px;top:632px" width="14" height="14" viewBox="0 0 14 14"><rect x="0.5" y="0.5" width="13" height="13" rx="2" fill="#fff" stroke="#a0a0a0" stroke-width="1"/></svg>
<div class="t" style="left:1189px;top:634.44px;font-size:12px;line-height:12px;color:#000;font-weight:normal;letter-spacing:-0.2px;">Standaard</div>
<div style="position:absolute;left:629px;top:666px;width:889px;height:1px;background:#d8d8d8"></div>
<div class="t" style="left:500px;width:200px;text-align:right;top:679.44px;font-size:12px;line-height:12px;color:#000;font-weight:normal;letter-spacing:-0.2px;">Adres</div>
<div style="position:absolute;left:707px;top:674px;width:448px;height:21px;background:#fff;border:1px solid #c4c4c4;border-radius:2px;box-sizing:border-box"></div>
<div class="t" style="left:714px;top:679.44px;font-size:12px;line-height:12px;color:#000;font-weight:normal;letter-spacing:-0.2px;">Bereik (1..N)</div>
<svg style="position:absolute;left:1139px;top:681px" width="11" height="7" viewBox="0 0 11 7"><path d="M0.8 1 L5.5 5.8 L10.2 1" fill="none" stroke="#333" stroke-width="1.1"/></svg>
<div class="t" style="left:500px;width:200px;text-align:right;top:705.44px;font-size:12px;line-height:12px;color:#000;font-weight:normal;letter-spacing:-0.2px;">1</div>
<div style="position:absolute;left:707px;top:701px;width:448px;height:21px;background:#fff;border:1px solid #c4c4c4;border-radius:2px;box-sizing:border-box"></div>
<div style="position:absolute;left:1134px;top:702px;width:1px;height:19px;background:#d0d0d0"></div>
<svg style="position:absolute;left:1139px;top:705px" width="11" height="14" viewBox="0 0 11 14"><path d="M1 5.5 L5 1.5 L9 5.5 M1 8.5 L5 12.5 L9 8.5" fill="none" stroke="#444" stroke-width="1"/></svg>
<div class="t" style="left:1046px;width:80px;text-align:right;top:706.44px;font-size:12px;line-height:12px;color:#000;font-weight:normal;letter-spacing:-0.2px;">20</div>
<div class="t" style="left:1212px;width:40px;text-align:right;top:706.44px;font-size:12px;line-height:12px;color:#000;font-weight:normal;letter-spacing:-0.2px;">N</div>
<div style="position:absolute;left:1259px;top:701px;width:259px;height:21px;background:#fff;border:1px solid #c4c4c4;border-radius:2px;box-sizing:border-box"></div>
<div style="position:absolute;left:1497px;top:702px;width:1px;height:19px;background:#d0d0d0"></div>
<svg style="position:absolute;left:1502px;top:705px" width="11" height="14" viewBox="0 0 11 14"><path d="M1 5.5 L5 1.5 L9 5.5 M1 8.5 L5 12.5 L9 8.5" fill="none" stroke="#444" stroke-width="1"/></svg>
<div class="t" style="left:1409px;width:80px;text-align:right;top:706.44px;font-size:12px;line-height:12px;color:#000;font-weight:normal;letter-spacing:-0.2px;">22</div>
<div class="t" style="left:629px;top:750.44px;font-size:12px;line-height:12px;color:#000;font-weight:normal;letter-spacing:-0.2px;">Toestandstoewijzing</div>
<div class="t" style="left:760px;top:750.44px;font-size:12px;line-height:12px;color:#000;font-weight:normal;letter-spacing:-0.2px;">Opties</div>
<div class="t" style="left:818px;top:750.44px;font-size:12px;line-height:12px;color:#000;font-weight:normal;letter-spacing:-0.2px;">Relais</div>
<div class="t" style="left:872px;top:750.44px;font-size:12px;line-height:12px;color:#000;font-weight:normal;letter-spacing:-0.2px;">Configuratie</div>
<div class="t" style="left:962px;top:750.44px;font-size:12px;line-height:12px;color:#000;font-weight:normal;letter-spacing:-0.2px;">Commentaar</div>
<div style="position:absolute;left:617px;top:770px;width:913px;height:2px;background:#c8c8c8"></div>
<div style="position:absolute;left:617px;top:768px;width:131px;height:3px;background:#8fb4dc"></div>
<div style="position:absolute;left:617px;top:772px;width:913px;height:223px;background:#fff"></div>
<div style="position:absolute;left:617px;top:772px;width:1px;height:223px;background:#c8c8c8"></div>
<div style="position:absolute;left:618px;top:796px;width:911px;height:1px;background:#e2e2e2"></div>
<div style="position:absolute;left:662px;top:772px;width:1px;height:24px;background:#e2e2e2"></div>
<div style="position:absolute;left:953px;top:772px;width:1px;height:24px;background:#e2e2e2"></div>
<div style="position:absolute;left:1210px;top:772px;width:1px;height:24px;background:#e2e2e2"></div>
<div style="position:absolute;left:1452px;top:772px;width:1px;height:24px;background:#e2e2e2"></div>
<div class="t" style="left:625px;top:779.44px;font-size:12px;line-height:12px;color:#000;font-weight:normal;letter-spacing:-0.2px;">Actief</div>
<div class="t" style="left:747.5px;width:120px;text-align:center;top:779.44px;font-size:12px;line-height:12px;color:#000;font-weight:normal;letter-spacing:-0.2px;">Toestand</div>
<div class="t" style="left:1021.5px;width:120px;text-align:center;top:779.44px;font-size:12px;line-height:12px;color:#000;font-weight:normal;letter-spacing:-0.2px;">Uitgang</div>
<div class="t" style="left:1271.0px;width:120px;text-align:center;top:779.44px;font-size:12px;line-height:12px;color:#000;font-weight:normal;letter-spacing:-0.2px;">Uitgang</div>
<div class="t" style="left:1453.0px;width:76px;text-align:center;top:779.44px;font-size:12px;line-height:12px;color:#000;font-weight:normal;letter-spacing:-0.2px;">Uitgang</div>
<svg style="position:absolute;left:634px;top:801px" width="14" height="14" viewBox="0 0 14 14"><rect x="0.5" y="0.5" width="13" height="13" rx="2" fill="#fff" stroke="#4a94e6" stroke-width="1"/><path d="M3 7.2 L5.6 10 L11 3.2" fill="none" stroke="#3b8ee8" stroke-width="1.4"/></svg>
<svg style="position:absolute;left:670px;top:799px" width="10" height="19" viewBox="0 0 10 19"><rect x="0.5" y="0" width="9" height="18" rx="4.5" fill="#000"/><rect x="0" y="17.5" width="10" height="1.5" fill="#000"/><circle cx="5" cy="4.5" r="1.8" fill="#2a2a2a"/><circle cx="5" cy="9.5" r="1.8" fill="#2a2a2a"/><circle cx="5" cy="14.5" r="1.8" fill="#e02020"/></svg>
<div class="t" style="left:689.5px;top:803.44px;font-size:12px;line-height:12px;color:#000;font-weight:normal;letter-spacing:-0.2px;">Ro</div>
<div class="t" style="left:955px;top:803.44px;font-size:12px;line-height:12px;color:#000;font-weight:normal;letter-spacing:-0.2px;">5 = 22 : Groen</div>
<div class="t" style="left:1212px;top:803.44px;font-size:12px;line-height:12px;color:#000;font-weight:normal;letter-spacing:-0.2px;">2 = 20 : Rood</div>
<div class="t" style="left:1454px;top:803.44px;font-size:12px;line-height:12px;color:#000;font-weight:normal;letter-spacing:-0.2px;">4 = 21 : Rood</div>
<div style="position:absolute;left:618px;top:820px;width:911px;height:23px;background:#f0f0f0"></div>
<svg style="position:absolute;left:634px;top:824px" width="14" height="14" viewBox="0 0 14 14"><rect x="0.5" y="0.5" width="13" height="13" rx="2" fill="#fff" stroke="#4a94e6" stroke-width="1"/><path d="M3 7.2 L5.6 10 L11 3.2" fill="none" stroke="#3b8ee8" stroke-width="1.4"/></svg>
<svg style="position:absolute;left:670px;top:822px" width="10" height="19" viewBox="0 0 10 19"><rect x="0.5" y="0" width="9" height="18" rx="4.5" fill="#000"/><rect x="0" y="17.5" width="10" height="1.5" fill="#000"/><circle cx="5" cy="4.5" r="1.8" fill="#10a050"/><circle cx="5" cy="9.5" r="1.8" fill="#2a2a2a"/><circle cx="5" cy="14.5" r="1.8" fill="#2a2a2a"/></svg>
<div class="t" style="left:689.5px;top:826.44px;font-size:12px;line-height:12px;color:#000;font-weight:normal;letter-spacing:-0.2px;">Gr</div>
<div class="t" style="left:955px;top:826.44px;font-size:12px;line-height:12px;color:#000;font-weight:normal;letter-spacing:-0.2px;">1 = 20 : Groen</div>
<div class="t" style="left:1212px;top:826.44px;font-size:12px;line-height:12px;color:#000;font-weight:normal;letter-spacing:-0.2px;">4 = 21 : Rood</div>
<div class="t" style="left:1454px;top:826.44px;font-size:12px;line-height:12px;color:#000;font-weight:normal;letter-spacing:-0.2px;">6 = 22 : Rood</div>
<svg style="position:absolute;left:634px;top:847px" width="14" height="14" viewBox="0 0 14 14"><rect x="0.5" y="0.5" width="13" height="13" rx="2" fill="#fff" stroke="#a0a0a0" stroke-width="1"/></svg>
<svg style="position:absolute;left:670px;top:845px" width="10" height="19" viewBox="0 0 10 19"><rect x="0.5" y="0" width="9" height="18" rx="4.5" fill="#000"/><rect x="0" y="17.5" width="10" height="1.5" fill="#000"/><circle cx="5" cy="4.5" r="1.8" fill="#2a2a2a"/><circle cx="5" cy="9.5" r="1.8" fill="#2a2a2a"/><circle cx="5" cy="14.5" r="1.8" fill="#2a2a2a"/></svg>
<div class="t" style="left:689.5px;top:849.44px;font-size:12px;line-height:12px;color:#7a7a7a;font-weight:normal;letter-spacing:-0.2px;">Gr</div>
<svg style="position:absolute;left:706px;top:849px" width="11" height="11" viewBox="0 0 11 11"><circle cx="5.5" cy="5.5" r="2.8" fill="#6a6a6a"/><path d="M5.5 0.5 V10.5 M0.5 5.5 H10.5 M2 2 L9 9 M9 2 L2 9" stroke="#8a8a8a" stroke-width="1"/></svg>
<div class="t" style="left:955px;top:849.44px;font-size:12px;line-height:12px;color:#000;font-weight:normal;letter-spacing:-0.2px;">-</div>
<div class="t" style="left:1212px;top:849.44px;font-size:12px;line-height:12px;color:#000;font-weight:normal;letter-spacing:-0.2px;">-</div>
<div class="t" style="left:1454px;top:849.44px;font-size:12px;line-height:12px;color:#000;font-weight:normal;letter-spacing:-0.2px;">-</div>
<div style="position:absolute;left:618px;top:866px;width:911px;height:23px;background:#f0f0f0"></div>
<svg style="position:absolute;left:634px;top:870px" width="14" height="14" viewBox="0 0 14 14"><rect x="0.5" y="0.5" width="13" height="13" rx="2" fill="#fff" stroke="#4a94e6" stroke-width="1"/><path d="M3 7.2 L5.6 10 L11 3.2" fill="none" stroke="#3b8ee8" stroke-width="1.4"/></svg>
<svg style="position:absolute;left:670px;top:868px" width="10" height="19" viewBox="0 0 10 19"><rect x="0.5" y="0" width="9" height="18" rx="4.5" fill="#000"/><rect x="0" y="17.5" width="10" height="1.5" fill="#000"/><circle cx="5" cy="4.5" r="1.8" fill="#2a2a2a"/><circle cx="5" cy="9.5" r="1.8" fill="#e8c010"/><circle cx="5" cy="14.5" r="1.8" fill="#2a2a2a"/></svg>
<div class="t" style="left:689.5px;top:872.44px;font-size:12px;line-height:12px;color:#000;font-weight:normal;letter-spacing:-0.2px;">Ge</div>
<div class="t" style="left:955px;top:872.44px;font-size:12px;line-height:12px;color:#000;font-weight:normal;letter-spacing:-0.2px;">3 = 21 : Groen</div>
<div class="t" style="left:1212px;top:872.44px;font-size:12px;line-height:12px;color:#000;font-weight:normal;letter-spacing:-0.2px;">2 = 20 : Rood</div>
<div class="t" style="left:1454px;top:872.44px;font-size:12px;line-height:12px;color:#000;font-weight:normal;letter-spacing:-0.2px;">6 = 22 : Rood</div>
<svg style="position:absolute;left:634px;top:893px" width="14" height="14" viewBox="0 0 14 14"><rect x="0.5" y="0.5" width="13" height="13" rx="2" fill="#fff" stroke="#a0a0a0" stroke-width="1"/></svg>
<svg style="position:absolute;left:670px;top:891px" width="10" height="19" viewBox="0 0 10 19"><rect x="0.5" y="0" width="9" height="18" rx="4.5" fill="#000"/><rect x="0" y="17.5" width="10" height="1.5" fill="#000"/><circle cx="5" cy="4.5" r="1.8" fill="#2a2a2a"/><circle cx="5" cy="9.5" r="1.8" fill="#2a2a2a"/><circle cx="5" cy="14.5" r="1.8" fill="#2a2a2a"/></svg>
<div class="t" style="left:689.5px;top:895.44px;font-size:12px;line-height:12px;color:#7a7a7a;font-weight:normal;letter-spacing:-0.2px;">Ge</div>
<svg style="position:absolute;left:708px;top:895px" width="11" height="11" viewBox="0 0 11 11"><circle cx="5.5" cy="5.5" r="2.8" fill="#6a6a6a"/><path d="M5.5 0.5 V10.5 M0.5 5.5 H10.5 M2 2 L9 9 M9 2 L2 9" stroke="#8a8a8a" stroke-width="1"/></svg>
<div class="t" style="left:955px;top:895.44px;font-size:12px;line-height:12px;color:#000;font-weight:normal;letter-spacing:-0.2px;">-</div>
<div class="t" style="left:1212px;top:895.44px;font-size:12px;line-height:12px;color:#000;font-weight:normal;letter-spacing:-0.2px;">-</div>
<div class="t" style="left:1454px;top:895.44px;font-size:12px;line-height:12px;color:#000;font-weight:normal;letter-spacing:-0.2px;">-</div>
<div style="position:absolute;left:618px;top:912px;width:911px;height:23px;background:#f0f0f0"></div>
<svg style="position:absolute;left:634px;top:916px" width="14" height="14" viewBox="0 0 14 14"><rect x="0.5" y="0.5" width="13" height="13" rx="2" fill="#fff" stroke="#a0a0a0" stroke-width="1"/></svg>
<svg style="position:absolute;left:670px;top:914px" width="10" height="19" viewBox="0 0 10 19"><rect x="0.5" y="0" width="9" height="18" rx="4.5" fill="#000"/><rect x="0" y="17.5" width="10" height="1.5" fill="#000"/><circle cx="5" cy="4.5" r="1.8" fill="#ffffff"/><circle cx="5" cy="9.5" r="1.8" fill="#2a2a2a"/><circle cx="5" cy="14.5" r="1.8" fill="#2a2a2a"/></svg>
<div class="t" style="left:689.5px;top:918.44px;font-size:12px;line-height:12px;color:#7a7a7a;font-weight:normal;letter-spacing:-0.2px;">Wi</div>
<div class="t" style="left:955px;top:918.44px;font-size:12px;line-height:12px;color:#000;font-weight:normal;letter-spacing:-0.2px;">-</div>
<div class="t" style="left:1212px;top:918.44px;font-size:12px;line-height:12px;color:#000;font-weight:normal;letter-spacing:-0.2px;">-</div>
<div class="t" style="left:1454px;top:918.44px;font-size:12px;line-height:12px;color:#000;font-weight:normal;letter-spacing:-0.2px;">-</div>
<svg style="position:absolute;left:634px;top:939px" width="14" height="14" viewBox="0 0 14 14"><rect x="0.5" y="0.5" width="13" height="13" rx="2" fill="#fff" stroke="#a0a0a0" stroke-width="1"/></svg>
<svg style="position:absolute;left:670px;top:937px" width="10" height="19" viewBox="0 0 10 19"><rect x="0.5" y="0" width="9" height="18" rx="4.5" fill="#000"/><rect x="0" y="17.5" width="10" height="1.5" fill="#000"/><circle cx="5" cy="4.5" r="1.8" fill="#2a2a2a"/><circle cx="5" cy="9.5" r="1.8" fill="#2a2a2a"/><circle cx="5" cy="14.5" r="1.8" fill="#2a2a2a"/></svg>
<div class="t" style="left:689.5px;top:941.44px;font-size:12px;line-height:12px;color:#7a7a7a;font-weight:normal;letter-spacing:-0.2px;">Ro</div>
<svg style="position:absolute;left:708px;top:941px" width="11" height="11" viewBox="0 0 11 11"><circle cx="5.5" cy="5.5" r="2.8" fill="#6a6a6a"/><path d="M5.5 0.5 V10.5 M0.5 5.5 H10.5 M2 2 L9 9 M9 2 L2 9" stroke="#8a8a8a" stroke-width="1"/></svg>
<div class="t" style="left:955px;top:941.44px;font-size:12px;line-height:12px;color:#000;font-weight:normal;letter-spacing:-0.2px;">-</div>
<div class="t" style="left:1212px;top:941.44px;font-size:12px;line-height:12px;color:#000;font-weight:normal;letter-spacing:-0.2px;">-</div>
<div class="t" style="left:1454px;top:941.44px;font-size:12px;line-height:12px;color:#000;font-weight:normal;letter-spacing:-0.2px;">-</div>
<div style="position:absolute;left:617px;top:995px;width:913px;height:1px;background:#c8c8c8"></div>
<div style="position:absolute;left:991px;top:1000px;width:83px;height:21px;background:#fff;border:2px solid #3c8ee8;border-radius:3px;box-sizing:border-box"></div>
<div class="t" style="left:992.5px;width:80px;text-align:center;top:1005.44px;font-size:12px;line-height:12px;color:#000;font-weight:normal;letter-spacing:-0.2px;">OK</div>
<div style="position:absolute;left:1074px;top:1000px;width:83px;height:21px;background:#fff;border:1px solid #c4c4c4;border-radius:3px;box-sizing:border-box"></div>
<div class="t" style="left:1075.5px;width:80px;text-align:center;top:1005.44px;font-size:12px;line-height:12px;color:#000;font-weight:normal;letter-spacing:-0.2px;">Annuleer</div>
</body></html>
